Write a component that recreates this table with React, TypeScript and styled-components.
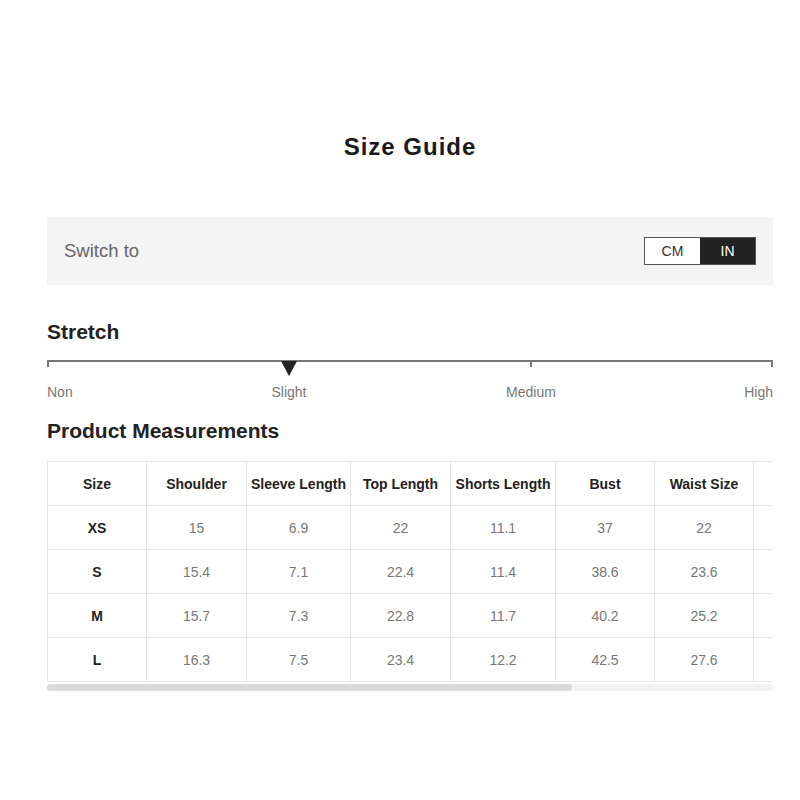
import React, { useEffect, useRef, useState } from "react";
import styled, { createGlobalStyle } from "styled-components";

const GlobalStyle = createGlobalStyle`
  body {
    margin: 0;
    background: #fff;
    font-family: "Liberation Sans", Arial, sans-serif;
    color: #222;
  }
`;

const Page = styled.div`
  width: 726px;
  padding: 132px 0 40px 47px;
`;

const Title = styled.h1`
  margin: 0;
  font-size: 24px;
  line-height: 30px;
  font-weight: 700;
  letter-spacing: 1px;
  text-align: center;
  color: #1a1a1a;
`;

const SwitchPanel = styled.div`
  margin-top: 55px;
  height: 68px;
  background: #f4f4f4;
  display: flex;
  align-items: center;
  justify-content: space-between;
  padding: 0 17px;
`;

const SwitchLabel = styled.span`
  font-size: 18.5px;
  color: #666;
`;

const Toggle = styled.div`
  display: flex;
  border: 1px solid #555;
`;

const ToggleButton = styled.button<{ $active: boolean }>`
  width: 55px;
  height: 26px;
  border: none;
  padding: 0;
  font-family: inherit;
  font-size: 14px;
  cursor: pointer;
  background: ${(p) => (p.$active ? "#222" : "#fff")};
  color: ${(p) => (p.$active ? "#fff" : "#333")};
`;

const SectionTitle = styled.h2<{ $top: number }>`
  margin: ${(p) => p.$top}px 0 0;
  font-size: 21px;
  line-height: 24px;
  font-weight: 700;
  color: #222;
`;

const Scale = styled.div`
  position: relative;
  margin-top: 16px;
  height: 42px;
`;

const ScaleLine = styled.div`
  height: 2px;
  background: #777;
`;

const Tick = styled.div<{ $pos: number }>`
  position: absolute;
  top: 0;
  left: ${(p) => p.$pos}%;
  width: 2px;
  height: 7px;
  background: #777;
  transform: translateX(${(p) => (p.$pos === 100 ? "-2px" : p.$pos === 0 ? "0" : "-1px")});
`;

const Marker = styled.div<{ $pos: number }>`
  position: absolute;
  top: 1px;
  left: ${(p) => p.$pos}%;
  transform: translateX(-50%);
  width: 0;
  height: 0;
  border-left: 8px solid transparent;
  border-right: 8px solid transparent;
  border-top: 15px solid #222;
`;

const ScaleLabel = styled.span<{ $pos: number; $align: "left" | "center" | "right" }>`
  position: absolute;
  top: 23px;
  left: ${(p) => p.$pos}%;
  font-size: 14px;
  line-height: 18px;
  color: #777;
  white-space: nowrap;
  transform: translateX(
    ${(p) => (p.$align === "left" ? "0" : p.$align === "center" ? "-50%" : "-100%")}
  );
`;

const TableScroll = styled.div`
  margin-top: 18px;
  overflow-x: auto;
  scrollbar-width: none;

  &::-webkit-scrollbar {
    display: none;
  }
`;

const ScrollTrack = styled.div`
  position: relative;
  margin-top: 2px;
  height: 7px;
  border-radius: 4px;
  background: #f3f3f3;
`;

const ScrollThumb = styled.div`
  position: absolute;
  top: 0;
  bottom: 0;
  border-radius: 4px;
  background: #dadada;
`;

const Table = styled.table`
  border-collapse: collapse;
  table-layout: fixed;
  width: 1003px;
`;

const HeadCell = styled.th<{ $w: number }>`
  width: ${(p) => p.$w}px;
  height: 44px;
  padding: 0 4px;
  box-sizing: border-box;
  border: 1px solid #e6e6e6;
  font-size: 14px;
  font-weight: 700;
  color: #222;
  text-align: center;
  white-space: nowrap;
`;

const Cell = styled.td<{ $bold?: boolean }>`
  height: 44px;
  padding: 0 4px;
  box-sizing: border-box;
  border: 1px solid #e6e6e6;
  font-size: 14px;
  font-weight: ${(p) => (p.$bold ? 700 : 400)};
  color: ${(p) => (p.$bold ? "#222" : "#777")};
  text-align: center;
`;

const columns = [
  { name: "Size", w: 99 },
  { name: "Shoulder", w: 100 },
  { name: "Sleeve Length", w: 104 },
  { name: "Top Length", w: 100 },
  { name: "Shorts Length", w: 105 },
  { name: "Bust", w: 99 },
  { name: "Waist Size", w: 99 },
  { name: "Hip Size", w: 99 },
  { name: "Thigh", w: 99 },
  { name: "Inseam", w: 99 },
];

const rowsIn = [
  ["XS", "15", "6.9", "22", "11.1", "37", "22", "35.4", "21.3", "2.8"],
  ["S", "15.4", "7.1", "22.4", "11.4", "38.6", "23.6", "37", "22.2", "2.9"],
  ["M", "15.7", "7.3", "22.8", "11.7", "40.2", "25.2", "38.6", "23.1", "3"],
  ["L", "16.3", "7.5", "23.4", "12.2", "42.5", "27.6", "40.9", "24.3", "3.1"],
];

const toCm = (v: string) => (Math.round(parseFloat(v) * 2.54 * 10) / 10).toString();

const stretchLevels = [
  { label: "Non", pos: 0, align: "left" as const },
  { label: "Slight", pos: 100 / 3, align: "center" as const },
  { label: "Medium", pos: 200 / 3, align: "center" as const },
  { label: "High", pos: 100, align: "right" as const },
];

const App = () => {
  const [unit, setUnit] = useState<"CM" | "IN">("IN");
  const [thumb, setThumb] = useState({ left: 0, width: 72.4 });
  const scrollRef = useRef<HTMLDivElement>(null);
  const rows = unit === "IN" ? rowsIn : rowsIn.map((r) => [r[0], ...r.slice(1).map(toCm)]);

  const updateThumb = () => {
    const el = scrollRef.current;
    if (!el) return;
    const width = (el.clientWidth / el.scrollWidth) * 100;
    const left = (el.scrollLeft / el.scrollWidth) * 100;
    setThumb({ left, width });
  };

  useEffect(() => {
    updateThumb();
  }, []);

  return (
    <>
      <GlobalStyle />
      <Page>
        <Title>Size Guide</Title>
        <SwitchPanel>
          <SwitchLabel>Switch to</SwitchLabel>
          <Toggle>
            <ToggleButton $active={unit === "CM"} onClick={() => setUnit("CM")}>
              CM
            </ToggleButton>
            <ToggleButton $active={unit === "IN"} onClick={() => setUnit("IN")}>
              IN
            </ToggleButton>
          </Toggle>
        </SwitchPanel>

        <SectionTitle $top={35}>Stretch</SectionTitle>
        <Scale>
          <ScaleLine />
          {stretchLevels
            .filter((s) => s.label !== "Slight")
            .map((s) => (
              <Tick key={s.label} $pos={s.pos} />
            ))}
          <Marker $pos={100 / 3} />
          {stretchLevels.map((s) => (
            <ScaleLabel key={s.label} $pos={s.pos} $align={s.align}>
              {s.label}
            </ScaleLabel>
          ))}
        </Scale>

        <SectionTitle $top={17}>Product Measurements</SectionTitle>
        <TableScroll ref={scrollRef} onScroll={updateThumb}>
          <Table>
            <thead>
              <tr>
                {columns.map((c) => (
                  <HeadCell key={c.name} $w={c.w}>
                    {c.name}
                  </HeadCell>
                ))}
              </tr>
            </thead>
            <tbody>
              {rows.map((r) => (
                <tr key={r[0]}>
                  {r.map((v, i) => (
                    <Cell key={i} $bold={i === 0}>
                      {v}
                    </Cell>
                  ))}
                </tr>
              ))}
            </tbody>
          </Table>
        </TableScroll>
        <ScrollTrack>
          <ScrollThumb style={{ left: `${thumb.left}%`, width: `${thumb.width}%` }} />
        </ScrollTrack>
      </Page>
    </>
  );
};

export default App;
